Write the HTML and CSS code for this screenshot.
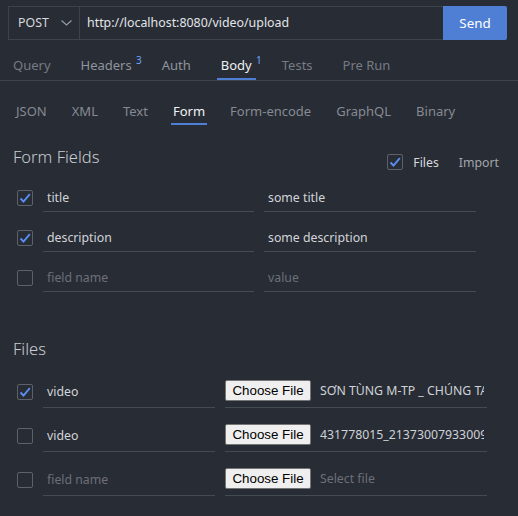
FILE: index.html
```html
<!DOCTYPE html>
<html>
<head>
<meta charset="utf-8">
<link rel="stylesheet" href="styles.css">
</head>
<body>
<div class="app">
  <div class="urlbar">
    <div class="method">
      <span>POST</span>
      <svg class="chev" width="11" height="6" viewBox="0 0 11 6"><path d="M0.5 0.5 L5.5 5 L10.5 0.5" fill="none" stroke="#9a9ea6" stroke-width="1.1"/></svg>
    </div>
    <div class="url">http://localhost:8080/video/upload</div>
    <button class="send">Send</button>
  </div>

  <div class="tabs">
    <div class="tab dim">Query</div>
    <div class="tab">Headers<sup class="badge">3</sup></div>
    <div class="tab">Auth</div>
    <div class="tab active">Body<sup class="badge">1</sup></div>
    <div class="tab dim">Tests</div>
    <div class="tab dim">Pre Run</div>
  </div>

  <div class="subtabs">
    <div class="subtab">JSON</div>
    <div class="subtab">XML</div>
    <div class="subtab">Text</div>
    <div class="subtab active">Form</div>
    <div class="subtab">Form-encode</div>
    <div class="subtab">GraphQL</div>
    <div class="subtab">Binary</div>
  </div>

  <div class="section-head">
    <h2 class="heading">Form Fields</h2>
    <div class="head-tools">
      <span class="cb checked"><svg viewBox="0 0 16 16"><path d="M3.5 8.5 L6.5 11.5 L12.8 4.2" fill="none" stroke="#5b8ef0" stroke-width="1.9"/></svg></span>
      <span class="files-label">Files</span>
      <span class="import">Import</span>
    </div>
  </div>

  <div class="rows">
    <div class="row">
      <span class="cb checked"><svg viewBox="0 0 16 16"><path d="M3.5 8.5 L6.5 11.5 L12.8 4.2" fill="none" stroke="#5b8ef0" stroke-width="1.9"/></svg></span>
      <div class="field name">title</div>
      <div class="field value">some title</div>
    </div>
    <div class="row">
      <span class="cb checked"><svg viewBox="0 0 16 16"><path d="M3.5 8.5 L6.5 11.5 L12.8 4.2" fill="none" stroke="#5b8ef0" stroke-width="1.9"/></svg></span>
      <div class="field name">description</div>
      <div class="field value">some description</div>
    </div>
    <div class="row">
      <span class="cb"></span>
      <div class="field name ph">field name</div>
      <div class="field value ph">value</div>
    </div>
  </div>

  <h2 class="heading files-heading">Files</h2>

  <div class="rows file-rows">
    <div class="row">
      <span class="cb checked"><svg viewBox="0 0 16 16"><path d="M3.5 8.5 L6.5 11.5 L12.8 4.2" fill="none" stroke="#5b8ef0" stroke-width="1.9"/></svg></span>
      <div class="field fname">video</div>
      <div class="file">
        <span class="choose">Choose File</span>
        <span class="filename">SƠN TÙNG M-TP _ CHÚNG TA CỦA HIỆN TẠI.mp4</span>
      </div>
    </div>
    <div class="row">
      <span class="cb"></span>
      <div class="field fname">video</div>
      <div class="file">
        <span class="choose">Choose File</span>
        <span class="filename">431778015_2137300793300912_video.mp4</span>
      </div>
    </div>
    <div class="row">
      <span class="cb"></span>
      <div class="field fname ph">field name</div>
      <div class="file">
        <span class="choose">Choose File</span>
        <span class="filename ph">Select file</span>
      </div>
    </div>
  </div>
</div>
</body>
</html>
```

FILE: styles.css
```css
* { box-sizing: border-box; }
html, body {
  margin: 0;
  background: #282c34;
}
body {
  font-family: "Noto Sans", "Open Sans", sans-serif;
  color: #d0d3d8;
  width: 518px;
  height: 516px;
  overflow: hidden;
}
.app {
  padding-top: 6px;
}

/* URL bar */
.urlbar {
  display: flex;
  height: 34px;
  margin: 0 11px 0 8px;
}
.method {
  width: 72px;
  border: 1px solid #3e424b;
  display: flex;
  align-items: center;
  justify-content: space-between;
  padding: 0 7px 1px 9px;
  font-size: 12.4px;
  color: #d6d9de;
}
.chev { margin-top: 1px; }
.url {
  flex: 1;
  border-top: 1px solid #3e424b;
  border-bottom: 1px solid #3e424b;
  display: flex;
  align-items: center;
  padding: 0 0 1px 7px;
  font-size: 12.4px;
  color: #e2e4e8;
}
.send {
  width: 64px;
  border: none;
  background: #4f7fd4;
  color: #ffffff;
  font-family: inherit;
  font-size: 13.4px;
  padding: 0 0 1px;
  border-radius: 0 2px 2px 0;
}

/* Main tabs */
.tabs {
  display: flex;
  gap: 22px;
  padding-left: 9px;
  border-bottom: 1px solid #3e424b;
}
.tab {
  position: relative;
  padding: 16px 4px 4px;
  line-height: 18px;
  font-size: 13px;
  color: #8f949c;
  border-bottom: 2px solid transparent;
}
.tab.dim { color: #767b84; }
.tab.active {
  color: #eef0f3;
  border-bottom-color: #4f7fd4;
}
.badge {
  position: absolute;
  top: 14px;
  right: -6px;
  font-size: 10px;
  line-height: 12px;
  color: #6ea2ff;
}

/* Sub tabs */
.subtabs {
  display: flex;
  gap: 21px;
  padding-left: 14px;
}
.subtab {
  padding: 21px 2px 3px;
  line-height: 18px;
  font-size: 13px;
  color: #868b93;
  border-bottom: 2px solid transparent;
}
.subtab.active {
  color: #f0f2f5;
  border-bottom-color: #4f7fd4;
}

/* Section headers */
.section-head {
  display: flex;
  justify-content: space-between;
  align-items: flex-start;
  margin-top: 21px;
  padding: 0 19px 0 13px;
}
.heading {
  margin: 0;
  font-size: 16.5px;
  font-weight: 300;
  line-height: 22px;
  color: #c9ccd2;
}
.head-tools {
  display: flex;
  align-items: center;
  margin-top: 7px;
  height: 18px;
  font-size: 12.3px;
}
.files-label { margin-left: 10px; color: #d6d9de; }
.import { margin-left: 20px; color: #a2a6ad; }

.files-heading {
  margin-top: 46px;
  padding-left: 13px;
}

/* Rows */
.rows {
  display: flex;
  flex-direction: column;
  gap: 8px;
  margin-top: 9px;
  padding-left: 17px;
}
.file-rows {
  gap: 12px;
  margin-top: 16px;
}
.row {
  display: flex;
  align-items: center;
  gap: 10px;
  height: 32px;
}
.cb {
  width: 16px;
  height: 16px;
  flex: none;
  border: 1px solid #5d616a;
  border-radius: 2px;
  position: relative;
  top: 2px;
}
.cb svg {
  position: absolute;
  left: -1px;
  top: -1px;
  width: 16px;
  height: 16px;
}
.head-tools .cb,
.file-rows .cb { top: 0; }
.field {
  height: 32px;
  border-bottom: 1px solid #464a53;
  padding: 3px 4px 0;
  display: flex;
  align-items: center;
  font-size: 12.3px;
  color: #d2d5da;
  white-space: nowrap;
  overflow: hidden;
}
.file-rows .field { padding: 0 4px 1px; }
.field.name { width: 211px; }
.field.value { width: 212px; }
.field.fname { width: 172px; }
.ph { color: #6c7079 !important; }

.file {
  width: 262px;
  height: 32px;
  border-bottom: 1px solid #464a53;
  display: flex;
  align-items: center;
  padding: 0 3px 2px 0;
  overflow: hidden;
}
.choose {
  flex: none;
  width: 86px;
  height: 21px;
  background: #efefef;
  border: 1px solid #767676;
  border-radius: 2px;
  font-family: "Liberation Sans", Arial, sans-serif;
  font-size: 13.33px;
  color: #000;
  display: flex;
  align-items: center;
  justify-content: center;
  padding-bottom: 1px;
}
.filename {
  margin-left: 9px;
  font-size: 12.3px;
  color: #cfd2d7;
  white-space: nowrap;
  overflow: hidden;
  flex: 1;
  min-width: 0;
}
```
